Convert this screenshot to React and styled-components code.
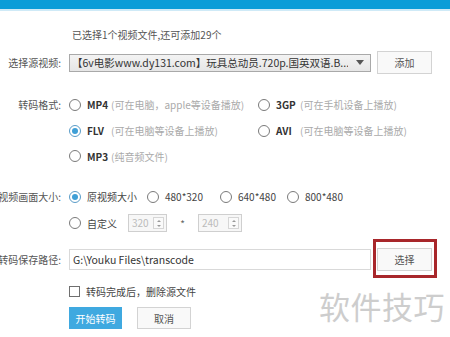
import React from 'react';
import styled, { createGlobalStyle } from 'styled-components';

const Global = createGlobalStyle`
  html, body {
    margin: 0;
    padding: 0;
    background: #fff;
    overflow: hidden;
  }
  body {
    font-family: "Noto Sans CJK SC", "Noto Sans", sans-serif;
    font-size: 10px;
    color: #444;
  }
`;

const Window = styled.div`
  position: relative;
  width: 450px;
  height: 337px;
  overflow: hidden;
  background: #fff;
`;

const TitleBar = styled.div`
  height: 9px;
  background: #0b9dd8;
  border-bottom: 2px solid #cfeaf7;
`;

const Body = styled.div`
  display: flex;
  flex-direction: column;
  padding-top: 16px;
`;

const Info = styled.div`
  height: 16px;
  line-height: 16px;
  padding-left: 72px;
  color: #555;
`;

const FormRow = styled.div`
  display: flex;
  align-items: ${p => (p.$top ? 'flex-start' : 'center')};
  margin-top: ${p => p.$mt || 0}px;
  min-height: ${p => p.$h || 23}px;
`;

const Label = styled.div`
  width: 61px;
  flex-shrink: 0;
  display: flex;
  justify-content: flex-end;
  white-space: nowrap;
  margin-right: 8px;
  color: #555;
  line-height: ${p => p.$lh || 23}px;
`;

const Field = styled.div`
  display: flex;
  align-items: center;
  gap: 6px;
`;

const Select = styled.div`
  box-sizing: border-box;
  width: 302px;
  height: 18px;
  border: 1px solid #a9a9a9;
  background: linear-gradient(#f3f3f3, #e6e6e6);
  display: flex;
  align-items: center;
  padding: 0 6px 0 2px;
  color: #333;
  font-size: 10.5px;
  white-space: nowrap;
  overflow: hidden;
`;

const SelectText = styled.span`
  flex: 1;
  overflow: hidden;
`;

const Arrow = styled.span`
  width: 0;
  height: 0;
  margin-left: 8px;
  border-left: 4px solid transparent;
  border-right: 4px solid transparent;
  border-top: 5px solid #555;
`;

const Button = styled.button`
  box-sizing: border-box;
  width: ${p => p.$w || 55}px;
  height: ${p => p.$h || 23}px;
  padding: 0;
  border: 1px solid ${p => (p.$primary ? '#3fa9e0' : '#d3d3d3')};
  background: ${p => (p.$primary ? '#3fa9e0' : '#f9f9f9')};
  color: ${p => (p.$primary ? '#fff' : '#555')};
  font-family: inherit;
  font-size: 10px;
  cursor: pointer;
`;

const FormatGrid = styled.div`
  display: grid;
  grid-template-columns: 189px auto;
  grid-template-rows: 27px 25px 26px;
  align-items: center;
`;

const Option = styled.label`
  display: inline-flex;
  align-items: center;
  gap: 6px;
  white-space: nowrap;
  color: #444;
`;

const Radio = styled.span`
  box-sizing: border-box;
  width: 12px;
  height: 12px;
  border-radius: 50%;
  border: 1px solid ${p => (p.$checked ? '#5a9cc8' : '#7a7a7a')};
  background: #fff;
  display: flex;
  align-items: center;
  justify-content: center;
  flex-shrink: 0;
  &::after {
    content: '';
    display: ${p => (p.$checked ? 'block' : 'none')};
    width: 6px;
    height: 6px;
    border-radius: 50%;
    background: #3f9fd6;
  }
`;

const Format = styled.span`
  display: inline-block;
  width: 24px;
  font-weight: 600;
  color: #333;
`;

const Hint = styled.span`
  color: #aaa;
`;

const SizeGrid = styled.div`
  display: grid;
  grid-template-columns: 78px 73px 67px auto;
  grid-auto-rows: 27px;
  align-items: center;
`;

const CustomRow = styled.div`
  display: flex;
  align-items: center;
  height: 26px;
`;

const CustomOption = styled(Option)`
  width: 59px;
`;

const Spin = styled.div`
  box-sizing: border-box;
  width: ${p => p.$w}px;
  height: 18px;
  border: 1px solid #cfcfcf;
  background: #f7f7f7;
  display: flex;
  align-items: stretch;
  color: #bbb;
`;

const SpinValue = styled.span`
  flex: 1;
  padding-left: 3px;
  line-height: 16px;
`;

const SpinArrows = styled.span`
  width: 9px;
  display: flex;
  flex-direction: column;
  align-items: center;
  justify-content: center;
  gap: 3px;
  margin: 2px 2px 2px 0;
  border: 1px solid #d6d6d6;
  background: #fafafa;
`;

const Tri = styled.span`
  width: 0;
  height: 0;
  border-left: 2px solid transparent;
  border-right: 2px solid transparent;
  ${p => (p.$up ? 'border-bottom: 2px solid #999;' : 'border-top: 2px solid #999;')}
`;

const Times = styled.span`
  width: 31px;
  text-align: center;
  color: #666;
`;

const PathInput = styled.div`
  box-sizing: border-box;
  width: 302px;
  height: 21px;
  border: 1px solid #d9d9d9;
  background: #fff;
  display: flex;
  align-items: center;
  padding-left: 3px;
  color: #333;
  font-size: 10.5px;
  white-space: nowrap;
`;

const Highlight = styled.div`
  position: relative;
  display: flex;
  &::after {
    content: '';
    position: absolute;
    top: -9px;
    left: -4px;
    right: -5px;
    bottom: -7px;
    border: 3px solid #a8272b;
    pointer-events: none;
  }
`;

const CheckRow = styled.label`
  display: flex;
  align-items: center;
  gap: 6px;
  height: 20px;
  margin: 10px 0 0 69px;
  color: #444;
`;

const Box = styled.span`
  box-sizing: border-box;
  width: 11px;
  height: 11px;
  border: 1px solid #6f6f6f;
  background: #fff;
`;

const Actions = styled.div`
  display: flex;
  gap: 15px;
  margin: 6px 0 0 69px;
`;

const Watermark = styled.div`
  position: absolute;
  right: 5px;
  top: 283px;
  font-size: 31px;
  letter-spacing: 0.5px;
  color: #cdcdcd;
  white-space: nowrap;
`;

const Spinner = ({ value, width }) => (
  <Spin $w={width}>
    <SpinValue>{value}</SpinValue>
    <SpinArrows>
      <Tri $up />
      <Tri />
    </SpinArrows>
  </Spin>
);

const formats = [
  { name: 'MP4', hint: '(可在电脑，apple等设备播放)' },
  { name: '3GP', hint: '(可在手机设备上播放)' },
  { name: 'FLV', hint: '(可在电脑等设备上播放)', checked: true },
  { name: 'AVI', hint: '(可在电脑等设备上播放)' },
  { name: 'MP3', hint: '(纯音频文件)' },
];

const sizes = [
  { name: '原视频大小', checked: true },
  { name: '480*320' },
  { name: '640*480' },
  { name: '800*480' },
];

export default function App() {
  return (
    <Window>
      <Global />
      <TitleBar />
      <Body>
        <Info>已选择1个视频文件,还可添加29个</Info>

        <FormRow $mt={8}>
          <Label>选择源视频:</Label>
          <Field>
            <Select>
              <SelectText>【6v电影www.dy131.com】玩具总动员.720p.国英双语.B...</SelectText>
              <Arrow />
            </Select>
            <Button>添加</Button>
          </Field>
        </FormRow>

        <FormRow $mt={17} $top>
          <Label $lh={27}>转码格式:</Label>
          <FormatGrid>
            {formats.map(f => (
              <Option key={f.name}>
                <Radio $checked={f.checked} />
                <span>
                  <Format>{f.name}</Format>
                  <Hint>{f.hint}</Hint>
                </span>
              </Option>
            ))}
          </FormatGrid>
        </FormRow>

        <FormRow $mt={14} $top>
          <Label $lh={27}>视频画面大小:</Label>
          <div>
            <SizeGrid>
              {sizes.map(s => (
                <Option key={s.name}>
                  <Radio $checked={s.checked} />
                  <span>{s.name}</span>
                </Option>
              ))}
            </SizeGrid>
            <CustomRow>
              <CustomOption>
                <Radio />
                <span>自定义</span>
              </CustomOption>
              <Spinner value="320" width={39} />
              <Times>*</Times>
              <Spinner value="240" width={44} />
            </CustomRow>
          </div>
        </FormRow>

        <FormRow $mt={12}>
          <Label>转码保存路径:</Label>
          <Field>
            <PathInput>G:\Youku Files\transcode</PathInput>
            <Highlight>
              <Button>选择</Button>
            </Highlight>
          </Field>
        </FormRow>

        <CheckRow>
          <Box />
          <span>转码完成后，删除源文件</span>
        </CheckRow>

        <Actions>
          <Button $primary $w={53} $h={22}>开始转码</Button>
          <Button $w={54} $h={22}>取消</Button>
        </Actions>
      </Body>
      <Watermark>软件技巧</Watermark>
    </Window>
  );
}
